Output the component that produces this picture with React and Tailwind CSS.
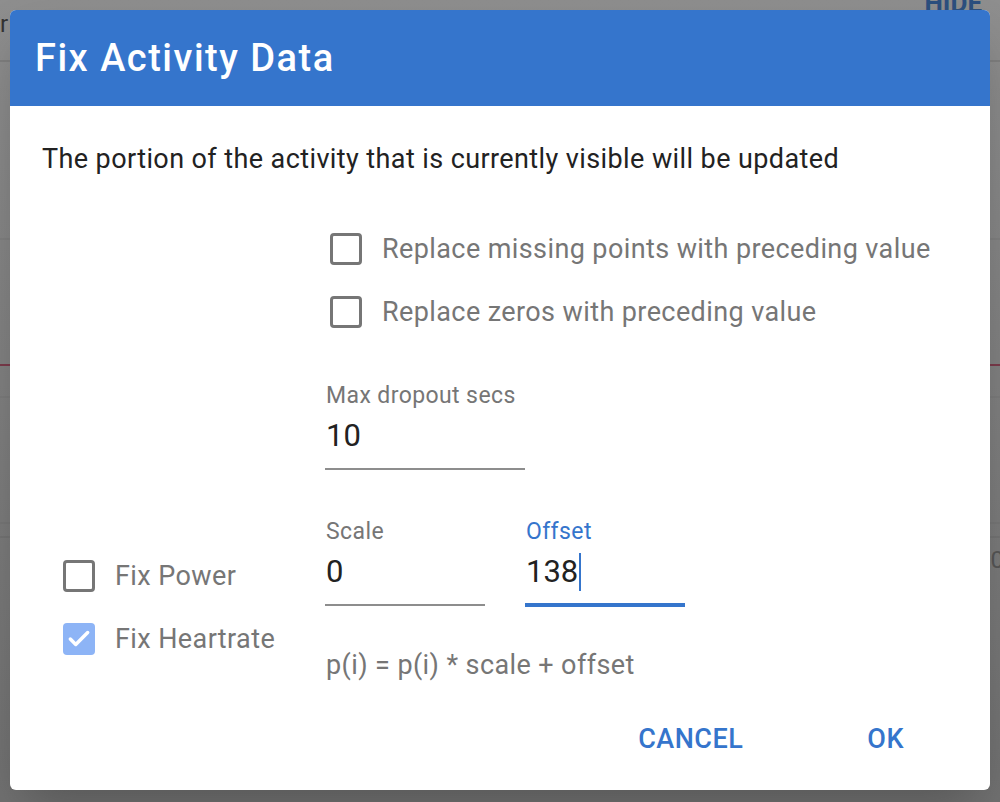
import { Check } from "lucide-react";

const font = { fontFamily: "Roboto, 'Noto Sans', sans-serif" };

function Box({ checked }) {
  if (checked) {
    return (
      <span className="flex items-center justify-center w-[32px] h-[32px] rounded-[4px] bg-[#8db4f6] shrink-0">
        <Check size={26} strokeWidth={3.2} className="text-white" />
      </span>
    );
  }
  return <span className="block w-[32px] h-[32px] rounded-[4px] border-[3px] border-[#767676] shrink-0" />;
}

function CheckRow({ label, checked }) {
  return (
    <div className="flex items-center gap-[20px] h-[63px]">
      <Box checked={checked} />
      <span className="text-[27px] tracking-[0.4px] text-[#767676] pt-[2px]">{label}</span>
    </div>
  );
}

function Field({ label, value, width, focused }) {
  return (
    <div className={width}>
      <div
        className={`text-[23px] tracking-[0.4px] leading-[26px] pl-[1px] pt-[1px] ${
          focused ? "text-[#3575cc]" : "text-[#767676]"
        }`}
      >
        {label}
      </div>
      <div
        className={`mt-[7px] flex items-center text-[31px] leading-[40px] text-[#222] pl-[1px] ${
          focused ? "pb-[11px] border-b-4 border-[#3575cc]" : "pb-[12px] border-b-2 border-[#8d8d8d]"
        }`}
      >
        {value}
        {focused && <span className="ml-[1px] w-[2px] h-[38px] bg-[#3575cc]" />}
      </div>
    </div>
  );
}

function Backdrop() {
  return (
    <div className="h-full w-full bg-linear-to-b from-[#8e8e8e] to-[#717171] flex flex-col">
      <div className="h-[40px] flex justify-between">
        <span className="text-[24px] text-[#333] leading-none mt-[12px]">r</span>
        <span className="text-[26px] font-bold text-[#2c4f7e] leading-none -mt-[10px] mr-[18px]">HIDE</span>
      </div>
      <div className="h-[22px] border-b-2 border-[#7e7e7e]" />
      <div className="h-[178px] border-b-2 border-[#7f7f7f]" />
      <div className="h-[126px] border-b-2 border-[#7a3a4a]" />
      <div className="h-[32px] border-b-2 border-[#7b7b7b]" />
      <div className="h-[126px] border-b-2 border-[#767676]" />
      <div className="h-[14px] border-b-2 border-[#737373]" />
      <div className="flex justify-end h-[40px] items-end">
        <span className="text-[24px] text-[#555] -mr-[4px]">00</span>
      </div>
    </div>
  );
}

export default function App() {
  return (
    <div className="relative w-[1000px] h-[802px] overflow-hidden" style={font}>
      <Backdrop />

      {/* Dialog */}
      <div className="absolute inset-0 pt-[10px] px-[10px]">
        <div className="w-[980px] h-[780px] bg-white rounded-[6px] overflow-hidden shadow-2xl flex flex-col">
          <div className="h-[96px] bg-[#3575cc] flex items-center pl-[25px] shrink-0">
            <h1 className="text-[38px] font-medium text-white tracking-[1.5px]">Fix Activity Data</h1>
          </div>

          <div className="px-[32px] flex flex-col">
            <p className="mt-[35px] text-[27px] tracking-[0.4px] leading-[36px] text-[#222]">
              The portion of the activity that is currently visible will be updated
            </p>

            <div className="ml-[283px] mt-[40px] pl-[5px]">
              <CheckRow label="Replace missing points with preceding value" />
              <CheckRow label="Replace zeros with preceding value" />
            </div>

            <div className="ml-[283px] mt-[39px]">
              <Field label="Max dropout secs" value="10" width="w-[200px]" />
            </div>

            <div className="flex">
              <div className="w-[283px] pt-[74px] pl-[21px]">
                <CheckRow label="Fix Power" />
                <CheckRow label="Fix Heartrate" checked />
              </div>
              <div className="flex flex-col">
                <div className="flex gap-[40px] mt-[48px]">
                  <Field label="Scale" value="0" width="w-[160px]" />
                  <Field label="Offset" value="138" width="w-[160px]" focused />
                </div>
                <div className="mt-[40px] text-[27px] tracking-[0.4px] leading-[36px] text-[#767676] pl-[1px]">
                  p(i) = p(i) * scale + offset
                </div>
              </div>
            </div>

            <div className="flex justify-end gap-[124px] mt-[38px] pr-[54px] text-[27px] leading-[36px] font-medium text-[#3575cc] tracking-[0.5px]">
              <button>CANCEL</button>
              <button>OK</button>
            </div>
          </div>
        </div>
      </div>
    </div>
  );
}
